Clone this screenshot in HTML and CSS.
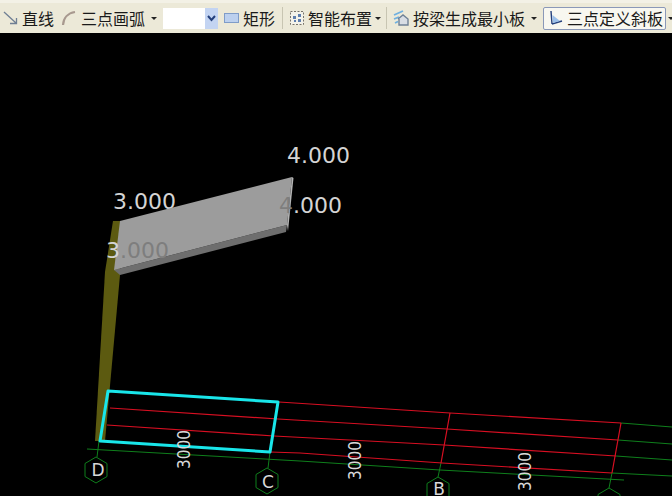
FILE: index.html
```html
<!DOCTYPE html>
<html lang="zh-CN">
  <head>
    <meta charset="UTF-8" />
    <title>三点定义斜板</title>
    <link rel="stylesheet" href="styles.css">
  </head>
  <body>
    <div class="toolbar">
      <div class="tool tool-line">
        <svg class="icon" width="16" height="16" viewBox="0 0 16 16"><path d="M1 2 L13 13 M7 13.500 H13.500 V8" fill="none" stroke="#6f7f94" stroke-width="1.300"/></svg>
        <span>直线</span>
      </div>
      <div class="tool tool-arc">
        <svg class="icon" width="16" height="16" viewBox="0 0 16 16"><path d="M2 15 C2.500 8 7 3 14 2" fill="none" stroke="#a8998f" stroke-width="2.200"/></svg>
        <span>三点画弧</span>
        <i class="caret"></i>
      </div>
      <div class="combo">
        <div class="combo-value"></div>
        <div class="combo-btn"><svg width="9" height="7" viewBox="0 0 9 7"><path d="M1 1 L4.500 5 L8 1" fill="none" stroke="#24407c" stroke-width="2"/></svg></div>
      </div>
      <div class="tool tool-rect">
        <svg class="icon" width="16" height="16" viewBox="0 0 16 16"><rect x="0.500" y="3.500" width="14" height="9" fill="#bcd0ee" stroke="#7f9cc8"/></svg>
        <span>矩形</span>
      </div>
      <div class="sep"></div>
      <div class="tool tool-smart">
        <svg class="icon" width="16" height="16" viewBox="0 0 16 16"><rect x="1.500" y="1.500" width="13" height="13" fill="#f4f3ea" stroke="#77736a" stroke-dasharray="2 1.500"/><path d="M4 6h3v3H4z M9 4h3v3H9z M5 10h2v2H5z M9 9h3v3H9z" fill="#5f7fae"/></svg>
        <span>智能布置</span>
        <i class="caret caret-tight"></i>
      </div>
      <div class="sep sep-beam"></div>
      <div class="tool tool-beam">
        <svg class="icon" width="16" height="16" viewBox="0 0 16 16"><path d="M1 5 L10 1 M1 9 L6 7 M2 13 L5 11.500" fill="none" stroke="#6fb0e0" stroke-width="1.800"/><path d="M5 9 L10 5 L15 9 V15 H6 V9" fill="#d8dde4" stroke="#6f8196" stroke-width="1.400"/></svg>
        <span>按梁生成最小板</span>
        <i class="caret"></i>
      </div>
      <div class="tool tool-active">
        <svg class="icon" width="16" height="16" viewBox="0 0 16 16"><path d="M4 14 L3 1 M4 14 L14 11" fill="none" stroke="#24407c" stroke-width="1.400"/><path d="M4.500 5 L12 11 L5 13 Z" fill="#9cc0ea"/></svg>
        <span>三点定义斜板</span>
      </div>
      <i class="caret caret-last"></i>
    </div>

    <svg class="canvas" width="672" height="463" viewBox="0 33 672 463">
      <!-- grid, green under red -->
      <g class="axis">
        <path d="M87 449 L300 461 L440 470 L624 480"/>
        <path d="M621 423 L672 427 M618 440 L672 444 M616 456 L672 460 M612 473 L672 476"/>
        <path d="M99 441 L97 457 M270 452 L268 468 M441 463 L438 477 M612 473 L609 488"/>
        <polygon points="96,457 107,463.500 107,476.500 96,483 85,476.500 85,463.500"/>
        <polygon points="267,468 278,474.500 278,487.500 267,494 256,487.500 256,474.500"/>
        <polygon points="438,477 449,483.500 449,496.500 438,503 427,496.500 427,483.500"/>
        <polygon points="609,488 620,494.500 620,507.500 609,514 598,507.500 598,494.500"/>
      </g>
      <g class="beam-lines">
        <path d="M279 402 L450 413 L621 423"/>
        <path d="M110 408 L278 419 L447 429 L618 440"/>
        <path d="M107 425 L274 436 L444 445 L616 456"/>
        <path d="M270 452 L300 453 L442 463 L612 473"/>
        <path d="M450 413 L441 463 M621 423 L612 473"/>
      </g>

      <text class="elev" x="113" y="209">3.000</text>

      <!-- column and slab -->
      <polygon class="column" points="95,441 105,272 113,221 120,221 120,275 105,441"/>
      <polygon class="slab-side" points="114,270 287,225 286,232 120,275"/>
      <polygon class="slab-top" points="120,221 292,177 287,225 114,270"/>
      <polygon class="slab-edge" points="292,177 293.500,178 288,231 287,225"/>

      <text class="elev" x="287" y="163">4.000</text>
      <text class="elev" x="279" y="213"><tspan class="ghost">4</tspan>.000</text>
      <text class="elev" x="106" y="258">3<tspan class="ghost">.000</tspan></text>

      <polygon class="selection" points="108,391 278,402 270,452 100,441"/>

      <text class="dim" textLength="39" lengthAdjust="spacingAndGlyphs" transform="translate(190 469) rotate(-90)">3000</text>
      <text class="dim" textLength="39" lengthAdjust="spacingAndGlyphs" transform="translate(361 480) rotate(-90)">3000</text>
      <text class="dim" textLength="39" lengthAdjust="spacingAndGlyphs" transform="translate(531 491) rotate(-90)">3000</text>

      <text class="axis-label" x="98" y="476">D</text>
      <text class="axis-label" x="268" y="488">C</text>
      <text class="axis-label" x="439" y="495">B</text>
      <text class="axis-label" x="610" y="509">A</text>
    </svg>
  </body>
</html>
```

FILE: styles.css
```css
html, body {
  margin: 0;
  padding: 0;
  height: 100%;
  overflow: hidden;
  background-color: black;
}

.toolbar {
  height: 33px;
  box-sizing: border-box;
  padding-left: 3px;
  display: flex;
  align-items: center;
  overflow: hidden;
  background-color: #ece9d8;
  border-top: 3px solid #f3f1e6;
  font-family: "Noto Sans CJK SC", "Liberation Sans", sans-serif;
  font-size: 16px;
  color: #1a1a1a;
}

.tool {
  display: flex;
  align-items: center;
  flex-shrink: 0;
  gap: 3px;
  white-space: nowrap;
}

.icon {
  flex-shrink: 0;
}

.tool-arc { margin-left: 7px; gap: 4px; }
.tool-rect { margin-left: 6px; }
.tool-smart { margin-left: 6px; }
.tool-beam { margin-left: 6px; gap: 4px; }

.tool-active {
  margin-left: 6px;
  padding: 0 2px 0 4px;
  height: 23px;
  background-color: #f8f7f0;
  border: 1px solid #8a98b8;
  border-radius: 2px;
  box-sizing: border-box;
}

.caret {
  width: 0;
  height: 0;
  margin-left: 2px;
  border-left: 3px solid transparent;
  border-right: 3px solid transparent;
  border-top: 3px solid #222;
}

.caret-tight {
  margin-left: 0;
}

.caret-last {
  flex-shrink: 0;
}

.combo {
  display: flex;
  flex-shrink: 0;
  margin-left: 6px;
  width: 55px;
  height: 21px;
  background-color: white;
}

.combo-value {
  flex: 1;
}

.combo-btn {
  width: 13px;
  display: flex;
  justify-content: center;
  align-items: center;
  background-color: #c3d4f2;
}

.sep {
  flex-shrink: 0;
  width: 1px;
  height: 22px;
  margin-left: 7px;
  background-color: #c8c5b2;
}

.sep-beam {
  margin-left: 5px;
}

.canvas {
  display: block;
}

.axis path, .axis polygon {
  fill: none;
  stroke: #0f7f1c;
  stroke-width: 1;
}

.beam-lines path {
  fill: none;
  stroke: #d80f22;
  stroke-width: 1.200;
}

.selection {
  fill: none;
  stroke: #19e6ea;
  stroke-width: 3;
  stroke-linejoin: round;
}

.column { fill: #5c5a10; }
.slab-top { fill: #9c9c9c; }
.slab-side { fill: #6e6e6e; }
.slab-edge { fill: #b4b4b4; }

.elev {
  font-family: "DejaVu Sans", sans-serif;
  font-size: 22px;
  fill: #d4d4d4;
}

.ghost {
  fill: #7e7e7e;
}

.dim {
  font-family: "DejaVu Sans", sans-serif;
  font-size: 18px;
  fill: #d8d8d8;
}

.axis-label {
  font-family: "DejaVu Sans", sans-serif;
  font-size: 17px;
  fill: #d8d8d8;
  text-anchor: middle;
}
```
